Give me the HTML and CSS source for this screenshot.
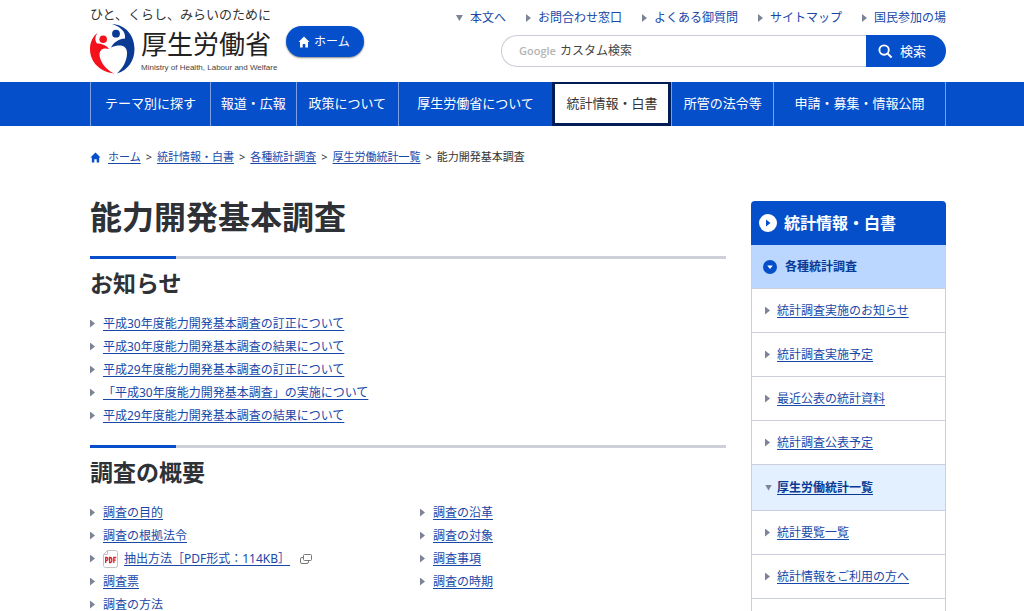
FILE: index.html
```html
<!DOCTYPE html>
<html lang="ja">
<head>
<meta charset="utf-8">
<meta name="viewport" content="width=device-width, initial-scale=1">
<title>能力開発基本調査｜厚生労働省</title>
<link rel="stylesheet" href="styles.css">
</head>
<body>
<header class="header wrap">
  <div class="brand">
    <p class="tagline">ひと、くらし、みらいのために</p>
    <a class="logo" href="#">
      <svg class="logo-mark" viewBox="0 0 45 50" aria-hidden="true">
        <circle cx="13.200" cy="15.200" r="3.800" fill="#f3121c"/>
        <path d="M8 8.500C5 12 4.500 16 7 19.500c4 0 9.500 1.500 12 5.500-5-1.500-9 0-9.500 5C9.500 37 15 45 24 49.500 10 48 0 38 0 25 0 18 3 12 8 8.500z" fill="#f3121c"/>
        <circle cx="26" cy="9.700" r="3.900" fill="#0a3a94"/>
        <path d="M22 0c13 .5 22.500 11 22.500 25 0 12-6.500 21-17.500 24.500 6-5.500 10-12.500 10-20.500 0-7-6-9.500-16-5.500 3-5.500 8-8.500 14-9C36 8 31 3 22 0z" fill="#0a3a94"/>
      </svg>
      <span class="logo-text">
        <span class="logo-name">厚生労働省</span>
        <span class="logo-en">Ministry of Health, Labour and Welfare</span>
      </span>
    </a>
  </div>
  <a class="home-button" href="#">
    <svg class="icon-home" viewBox="0 0 12 12" aria-hidden="true"><path d="M6 .5 11.500 6H10v5.500H7.300V8H4.700v3.500H2V6H.5z" fill="currentColor"/></svg>
    ホーム
  </a>
  <div class="tools">
    <ul class="quick">
      <li class="arrow down"><a href="#main">本文へ</a></li>
      <li class="arrow"><a href="#">お問合わせ窓口</a></li>
      <li class="arrow"><a href="#">よくある御質問</a></li>
      <li class="arrow"><a href="#">サイトマップ</a></li>
      <li class="arrow"><a href="#">国民参加の場</a></li>
    </ul>
    <form class="search">
      <div class="search-field">
        <label class="search-label" for="q">Google</label>
        <input class="search-input" id="q" type="text" placeholder="カスタム検索">
      </div>
      <button class="search-button" type="button">
        <svg class="icon-search" viewBox="0 0 16 16" aria-hidden="true"><circle cx="6.500" cy="6.500" r="5" fill="none" stroke="currentColor" stroke-width="2"/><path d="m10 10 4.500 4.500" stroke="currentColor" stroke-width="2.200"/></svg>
        検索
      </button>
    </form>
  </div>
</header>

<nav class="nav">
  <div class="wrap">
    <ul class="nav-list">
      <li><a href="#">テーマ別に探す</a></li>
      <li><a href="#">報道・広報</a></li>
      <li><a href="#">政策について</a></li>
      <li><a href="#">厚生労働省について</a></li>
      <li><a class="active" href="#">統計情報・白書</a></li>
      <li><a href="#">所管の法令等</a></li>
      <li><a href="#">申請・募集・情報公開</a></li>
    </ul>
  </div>
</nav>

<div class="wrap">
  <nav class="crumbs">
    <svg class="icon-crumb" viewBox="0 0 12 12" aria-hidden="true"><path d="M6 .5 11.500 6H10v5.500H7.300V8H4.700v3.500H2V6H.5z" fill="currentColor"/></svg>
    <a href="#">ホーム</a><span>&gt;</span>
    <a href="#">統計情報・白書</a><span>&gt;</span>
    <a href="#">各種統計調査</a><span>&gt;</span>
    <a href="#">厚生労働統計一覧</a><span>&gt;</span>
    能力開発基本調査
  </nav>

  <div class="columns">
    <main class="main" id="main">
      <h1 class="title">能力開発基本調査</h1>
      <section class="section">
        <h2 class="heading">お知らせ</h2>
        <ul class="links">
          <li class="arrow"><a href="#">平成30年度能力開発基本調査の訂正について</a></li>
          <li class="arrow"><a href="#">平成30年度能力開発基本調査の結果について</a></li>
          <li class="arrow"><a href="#">平成29年度能力開発基本調査の訂正について</a></li>
          <li class="arrow"><a href="#">「平成30年度能力開発基本調査」の実施について</a></li>
          <li class="arrow"><a href="#">平成29年度能力開発基本調査の結果について</a></li>
        </ul>
      </section>
      <section class="section">
        <h2 class="heading">調査の概要</h2>
        <div class="link-columns">
          <ul class="links">
            <li class="arrow"><a href="#">調査の目的</a></li>
            <li class="arrow"><a href="#">調査の根拠法令</a></li>
            <li class="arrow">
              <svg class="icon-pdf" viewBox="0 0 15 18" aria-hidden="true"><path d="M4.500.5h8a2 2 0 0 1 2 2v13a2 2 0 0 1-2 2h-10a2 2 0 0 1-2-2v-11z" fill="#fff" stroke="#bfc3c9"/><path d="M4.500.5v4h-4" fill="none" stroke="#bfc3c9"/><g fill="none" stroke="#d8232a" stroke-width="1.300"><path d="M2.700 13V7.500h.8a1.400 1.500 0 0 1 0 3h-.8M6.600 7.500v5h.6c2.200 0 2.200-5 0-5zM10.800 13V7.500h2.400M10.800 10.200h2"/></g></svg>
              <a href="#">抽出方法［PDF形式：114KB］</a>
              <svg class="icon-window" viewBox="0 0 12 10" aria-hidden="true"><g fill="#fff" stroke="#777"><rect x=".5" y="3.500" width="8" height="6" rx="1.500"/><rect x="3.500" y=".5" width="8" height="6" rx="1"/></g></svg>
            </li>
            <li class="arrow"><a href="#">調査票</a></li>
            <li class="arrow"><a href="#">調査の方法</a></li>
          </ul>
          <ul class="links">
            <li class="arrow"><a href="#">調査の沿革</a></li>
            <li class="arrow"><a href="#">調査の対象</a></li>
            <li class="arrow"><a href="#">調査事項</a></li>
            <li class="arrow"><a href="#">調査の時期</a></li>
          </ul>
        </div>
      </section>
    </main>

    <aside class="side">
      <a class="side-title" href="#">
        <svg class="icon-title" viewBox="0 0 18 18" aria-hidden="true"><circle cx="9" cy="9" r="9" fill="#fff"/><path d="m7 5.500 4.500 3.500L7 12.500z" fill="#064fcb"/></svg>
        統計情報・白書
      </a>
      <a class="side-group" href="#">
        <svg class="icon-group" viewBox="0 0 14 14" aria-hidden="true"><circle cx="7" cy="7" r="7" fill="#064fcb"/><path d="M4.200 5.500h5.600L7 9z" fill="#fff"/></svg>
        各種統計調査
      </a>
      <ul class="side-list">
        <li class="arrow"><a href="#">統計調査実施のお知らせ</a></li>
        <li class="arrow"><a href="#">統計調査実施予定</a></li>
        <li class="arrow"><a href="#">最近公表の統計資料</a></li>
        <li class="arrow"><a href="#">統計調査公表予定</a></li>
        <li class="arrow down current"><a href="#">厚生労働統計一覧</a></li>
        <li class="arrow"><a href="#">統計要覧一覧</a></li>
        <li class="arrow"><a href="#">統計情報をご利用の方へ</a></li>
      </ul>
    </aside>
  </div>
</div>
</body>
</html>
```
FILE: styles.css
```css
* { box-sizing: border-box; }

body {
  margin: 0;
  background: #fff;
  color: #333;
  font: 12px/22px "Noto Sans", "Noto Sans CJK JP", sans-serif;
}

ul, h1, h2, p { margin: 0; padding: 0; }
ul { list-style: none; }
a { color: #1848a8; text-underline-offset: 2px; }
svg { display: block; flex: none; }

.wrap { padding: 0 78px 0 90px; }

/* Lines led by a small triangle */
.arrow { display: flex; align-items: center; }
.arrow::before {
  content: "";
  flex: none;
  width: 5px;
  height: 8px;
  margin-right: 8px;
  background: #7d8498;
  clip-path: polygon(0 0, 100% 50%, 0 100%);
}
.arrow.down::before {
  width: 7px;
  height: 6px;
  margin-right: 6px;
  clip-path: polygon(0 0, 100% 0, 50% 100%);
}

/* Header */
.header {
  display: flex;
  align-items: flex-start;
  height: 82px;
}
.brand { width: 184px; white-space: nowrap; }
.tagline { padding-top: 4px; font-size: 13px; line-height: 20px; }
.logo { display: flex; gap: 6px; color: #222; text-decoration: none; }
.logo-mark { width: 45px; height: 50px; }
.logo-text { display: flex; flex-direction: column; }
.logo-name { font-size: 26px; line-height: 40px; }
.logo-en {
  font: 8px/8px "Liberation Sans", Arial, sans-serif;
  color: #444;
}
.home-button {
  display: flex;
  align-items: center;
  gap: 4px;
  margin: 26px 0 0 12px;
  padding: 0 14px 0 12px;
  border-radius: 16px;
  background: #064fcb;
  box-shadow: 0 1px 2px #8a8a8a;
  color: #fff;
  line-height: 31px;
  text-decoration: none;
  white-space: nowrap;
}
.icon-home { width: 12px; height: 12px; }
.tools { margin-left: auto; padding-top: 7px; }
.quick { display: flex; justify-content: flex-end; gap: 20px; white-space: nowrap; }
.quick a { text-decoration: none; }
.quick .arrow::before { margin-right: 7px; }
.search { display: flex; width: 445px; height: 32px; margin: 6px 0 0 auto; }
.search-field {
  display: flex;
  flex: 1;
  align-items: center;
  gap: 4px;
  padding-left: 17px;
  border: 1px solid #cbcbd6;
  border-right: 0;
  border-radius: 16px 0 0 16px;
}
.search-label { color: #b4b4b4; font: 600 11px/20px "Open Sans", sans-serif; }
.search-input {
  flex: 1;
  min-width: 0;
  padding: 0;
  border: 0;
  background: none;
  font: inherit;
}
.search-input::placeholder { color: #444; opacity: 1; }
.search-button {
  display: flex;
  align-items: center;
  gap: 7px;
  width: 80px;
  padding: 0 0 0 12px;
  border: 0;
  border-radius: 0 16px 16px 0;
  background: #064fcb;
  color: #fff;
  font: inherit;
  font-size: 13px;
}
.icon-search { width: 15px; height: 15px; }

/* Global navigation */
.nav { background: #064fcb; }
.nav-list {
  display: grid;
  grid-template-columns: 120fr 86fr 102fr 155fr 119fr 102fr 172fr;
  border-right: 1px solid #7b9fe0;
}
.nav-list a {
  display: flex;
  justify-content: center;
  height: 44px;
  border-left: 1px solid #7b9fe0;
  color: #fff;
  font-size: 13px;
  line-height: 42px;
  text-decoration: none;
  white-space: nowrap;
}
.nav-list .active {
  border: 3px solid #001c56;
  border-top-width: 2px;
  background: #fff;
  color: #333;
  line-height: 38px;
}

/* Breadcrumbs */
.crumbs {
  display: flex;
  align-items: center;
  padding-top: 20px;
  font-size: 11px;
  white-space: nowrap;
}
.crumbs span { margin: 0 5px; }
.icon-crumb { width: 11px; height: 11px; margin-right: 7px; color: #064fcb; }

/* Content and side menu */
.columns { display: flex; align-items: flex-start; gap: 25px; padding-top: 33px; }
.main { flex: 1; }
.title { color: #2e3136; font-size: 32px; line-height: 32px; }
.section { padding-bottom: 18px; }
.title + .section { padding-top: 23px; }
.heading {
  padding: 8px 0 13px;
  border-top: 3px solid;
  border-image: linear-gradient(to right, #064fcb 88px, #cfd1d8 88px) 3;
  color: #2e3136;
  font-size: 23px;
  line-height: 32px;
}
.link-columns { display: grid; grid-template-columns: 1fr 1fr; gap: 24px; }
.links .arrow { height: 23px; white-space: nowrap; }
.icon-pdf { width: 15px; height: 18px; margin-right: 6px; }
.icon-window { width: 12px; height: 10px; margin-left: 10px; }

.side { width: 195px; }
.side-title, .side-group {
  display: flex;
  align-items: center;
  height: 44px;
  font-weight: 700;
  text-decoration: none;
}
.side-title {
  gap: 7px;
  padding-left: 8px;
  border-radius: 4px 4px 0 0;
  background: #064fcb;
  color: #fff;
  font-size: 16px;
}
.side-group {
  gap: 8px;
  padding-left: 11px;
  border: 1px solid #cbcfdc;
  border-top: 0;
  background: #bbd6ff;
  color: #083a94;
}
.icon-title { width: 18px; height: 18px; }
.icon-group { width: 14px; height: 14px; }
.side-list { padding-bottom: 24px; border: 1px solid #cbcfdc; border-width: 0 1px; }
.side-list .arrow {
  height: 44px;
  padding-left: 13px;
  border-bottom: 1px solid #cbcfdc;
}
.side-list .arrow::before { margin-right: 7px; }
.side-list .down::before { margin-right: 5px; }
.side-list .current { height: 46px; background: #e3f0ff; font-weight: 700; }
.side-list .current a { color: #083a94; }
```
